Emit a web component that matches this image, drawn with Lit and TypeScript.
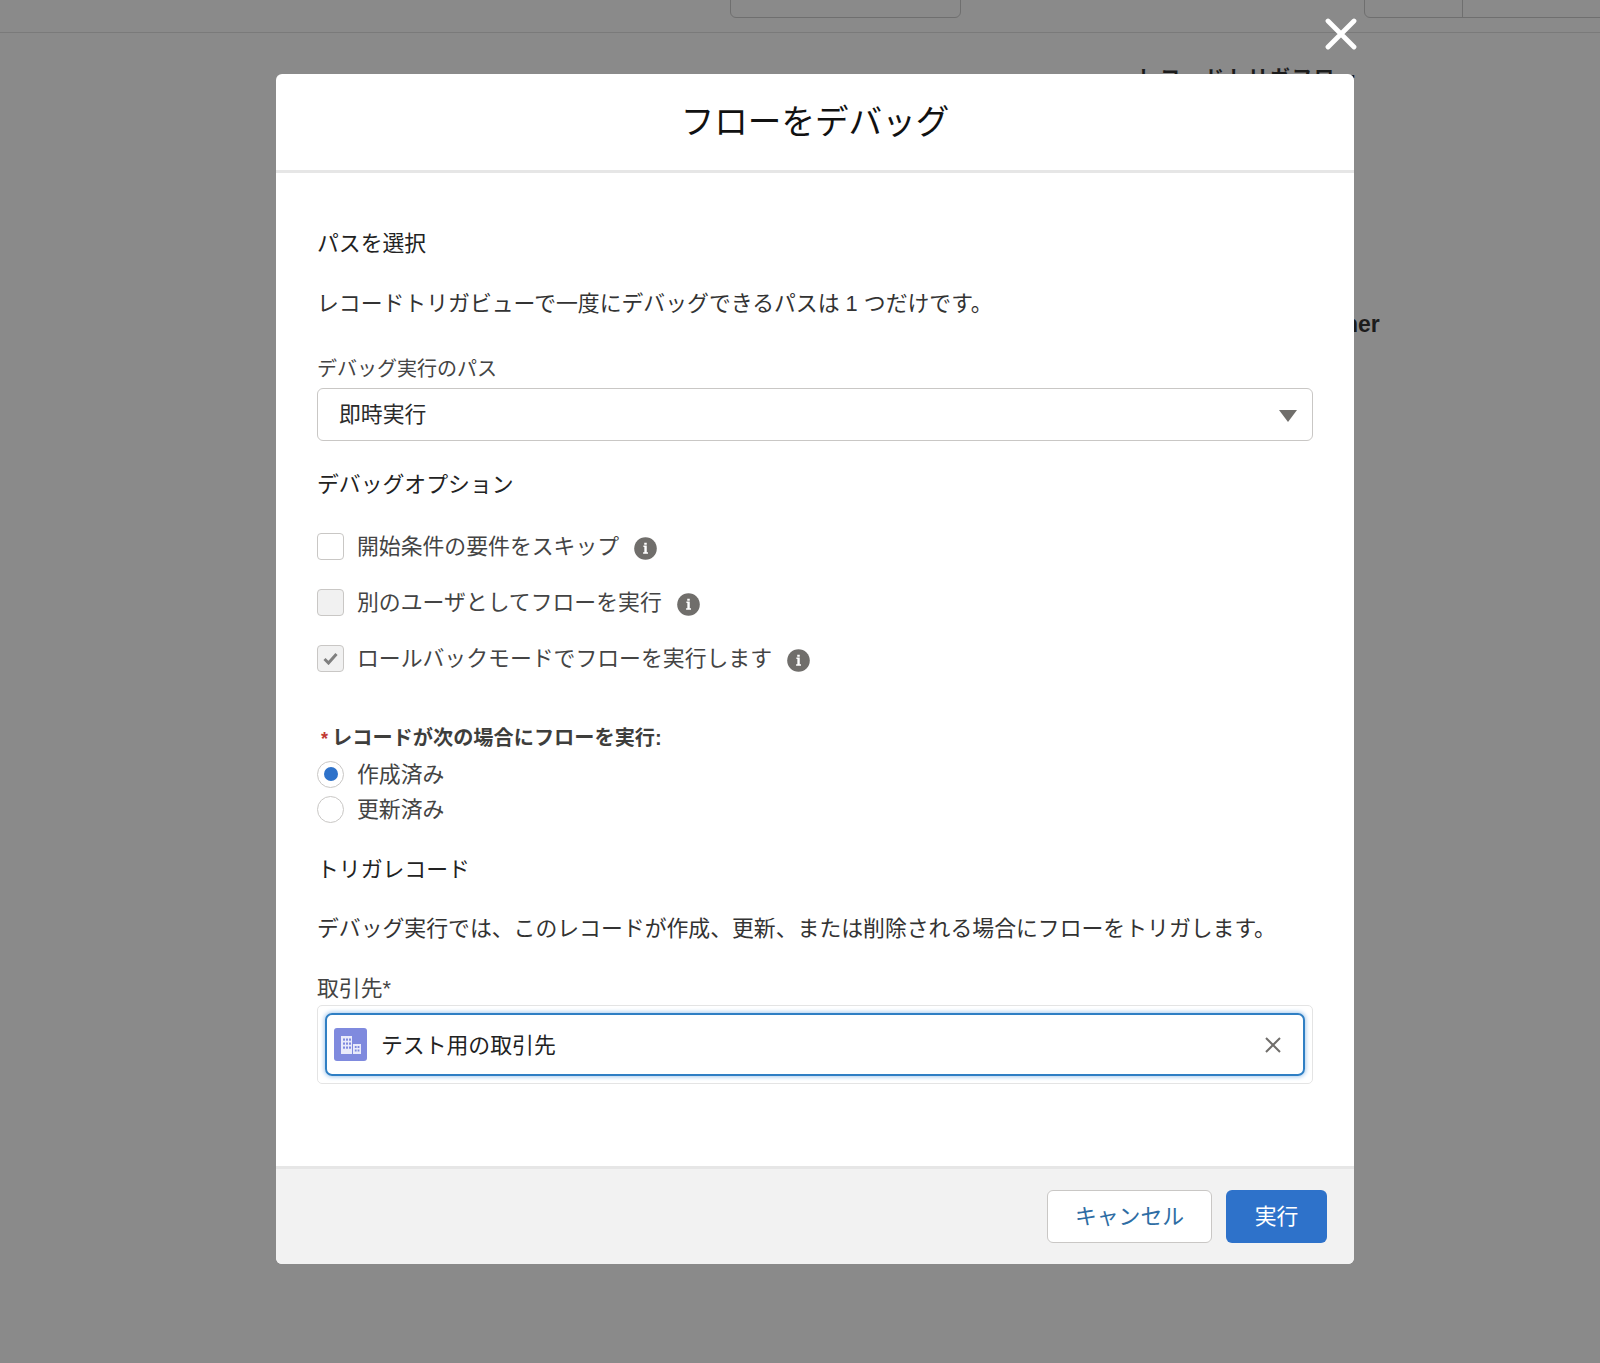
import { LitElement, html, css, svg } from "lit";
import { customElement } from "lit/decorators.js";

const info = svg`<svg class="info" width="23" height="23" viewBox="0 0 22 22"><circle cx="11" cy="11" r="10.8" fill="#706e6b"/><path d="M9 8.2h3.2v6.4h1.2V16H8.7v-1.4h1.2v-5H9z M9.8 5.4h2.4v1.9H9.8z" fill="#fff"/></svg>`;

@customElement("app-root")
export class AppRoot extends LitElement {
  static styles = css`
    :host {
      display: block;
      height: 1363px;
      background: #8a8a8a;
      overflow: hidden;
      position: relative;
      font-family: "Liberation Sans", "Noto Sans CJK JP", sans-serif;
      color: #2b2b2b;
    }
    .topbar {
      height: 32px;
      border-bottom: 1px solid #7a7a7a;
      position: relative;
    }
    .ghost-btn {
      position: absolute;
      top: -18px;
      height: 36px;
      border: 1.5px solid #6f6f6f;
      border-radius: 6px;
      box-sizing: border-box;
    }
    .g1 { left: 730px; width: 231px; }
    .g2 { left: 1364px; width: 300px; }
    .g2::after {
      content: "";
      position: absolute;
      left: 97px;
      top: 0;
      bottom: 0;
      border-left: 1px solid #6f6f6f;
    }
    .behind {
      position: absolute;
      font-weight: 700;
      color: #1c1c1c;
    }
    .b1 { left: 1138px; top: 62px; font-size: 20px; letter-spacing: 2px; }
    .b2 { left: 1344px; top: 311px; font-size: 23px; }
    .close {
      position: absolute;
      left: 1325px;
      top: 18px;
      width: 32px;
      height: 32px;
    }
    .wrap {
      position: absolute;
      left: 276px;
      top: 74px;
      width: 1078px;
      height: 1190px;
      display: flex;
      flex-direction: column;
      background: #fff;
      border-radius: 6px;
      overflow: hidden;
    }
    header {
      flex: none;
      height: 90px;
      padding-bottom: 6px;
      border-bottom: 3px solid #e6e6e6;
      display: flex;
      align-items: center;
      justify-content: center;
      font-size: 33.6px;
      color: #111;
    }
    main {
      flex: 1;
      padding: 0 41px;
      font-size: 21.85px;
    }
    .line { margin: 0; line-height: 30px; }
    .h1 { padding-top: 56px; color: #222; }
    .desc { margin-top: 30px; color: #333; }
    .lbl { margin-top: 35px; font-size: 20px; color: #444; line-height: 30px; }
    .select {
      margin-top: 4px;
      height: 53px;
      box-sizing: border-box;
      border: 1.5px solid #c9c7c5;
      border-radius: 6px;
      display: flex;
      align-items: center;
      justify-content: space-between;
      padding: 0 15px 0 21px;
      color: #2b2b2b;
    }
    .select .v { margin-top: -4px; }
    .tri {
      width: 0;
      height: 0;
      border-left: 9px solid transparent;
      border-right: 9px solid transparent;
      border-top: 12px solid #706e6b;
      margin-top: 3px;
    }
    .h2 { margin-top: 29px; color: #222; }
    .opts { margin-top: 32px; display: flex; flex-direction: column; gap: 28px; }
    .opt { display: flex; align-items: center; height: 28px; color: #444; }
    .opt .t { margin-top: -3px; }
    .box {
      flex: none;
      width: 27px;
      height: 27px;
      box-sizing: border-box;
      border: 1.5px solid #c9c7c5;
      border-radius: 4px;
      background: #fff;
      margin-right: 13px;
      display: flex;
      align-items: center;
      justify-content: center;
    }
    .box.dis { background: #f1f1f1; }
    .info { margin-left: 15px; margin-top: 4px; flex: none; }
    .req {
      margin-top: 51px;
      font-weight: 700;
      font-size: 20.2px;
      color: #3e3e3c;
      line-height: 30px;
      padding-left: 4px;
    }
    .req span { color: #c23934; margin-right: 4px; font-size: 18px; }
    .radios { margin-top: 6px; display: flex; flex-direction: column; gap: 7px; }
    .radio { display: flex; align-items: center; height: 28px; color: #444; }
    .radio .t { margin-top: -3px; }
    .dot {
      flex: none;
      width: 27px;
      height: 27px;
      box-sizing: border-box;
      border: 1.5px solid #c9c7c5;
      border-radius: 50%;
      margin-right: 13px;
      display: flex;
      align-items: center;
      justify-content: center;
    }
    .dot i { width: 14px; height: 14px; border-radius: 50%; background: #2e72ca; }
    .h3 { margin-top: 32px; color: #222; }
    .desc2 { margin-top: 29px; color: #333; }
    .lbl2 { margin-top: 30px; color: #444; }
    .lookup {
      margin-top: 1px;
      height: 79px;
      box-sizing: border-box;
      border: 1px solid #e4e4e4;
      border-radius: 5px;
      padding: 7px;
      display: flex;
    }
    .pill {
      flex: 1;
      border: 2px solid #2f7fc4;
      border-radius: 7px;
      box-shadow: 0 0 4px 1px #a8cbee;
      display: flex;
      align-items: center;
      padding: 0 21px 0 7px;
      color: #222;
    }
    .acct {
      flex: none;
      width: 33px;
      height: 33px;
      border-radius: 3px;
      background: #7f8ade;
      margin-right: 14px;
      display: flex;
      align-items: center;
      justify-content: center;
    }
    .pill .name { flex: 1; margin-top: -2px; }
    footer {
      flex: none;
      height: 98px;
      box-sizing: border-box;
      border-top: 3px solid #e6e6e6;
      background: #f2f2f2;
      display: flex;
      justify-content: flex-end;
      align-items: flex-start;
      gap: 14px;
      padding: 21px 27px 0 0;
    }
    .btn {
      height: 53px;
      box-sizing: border-box;
      border-radius: 6px;
      font-size: 21.85px;
      display: flex;
      align-items: center;
      justify-content: center;
      padding-bottom: 5px;
    }
    .cancel { width: 165px; background: #fff; border: 1.5px solid #c9c7c5; color: #2e6da4; }
    .run { width: 101px; background: #2e72ca; color: #fff; }
  `;

  render() {
    return html`
      <div class="topbar">
        <div class="ghost-btn g1"></div>
        <div class="ghost-btn g2"></div>
      </div>
      <div class="behind b1">レコードトリガフロー</div>
      <div class="behind b2">ner</div>
      <svg class="close" viewBox="0 0 32 32"><path d="M3 3 L29 29 M29 3 L3 29" stroke="#fff" stroke-width="4.8" stroke-linecap="round" fill="none"/></svg>
      <div class="wrap">
        <header>フローをデバッグ</header>
        <main>
          <p class="line h1">パスを選択</p>
          <p class="line desc">レコードトリガビューで一度にデバッグできるパスは 1 つだけです。</p>
          <div class="lbl">デバッグ実行のパス</div>
          <div class="select"><span class="v">即時実行</span><span class="tri"></span></div>
          <p class="line h2">デバッグオプション</p>
          <div class="opts">
            <div class="opt"><span class="box"></span><span class="t">開始条件の要件をスキップ</span>${info}</div>
            <div class="opt"><span class="box dis"></span><span class="t">別のユーザとしてフローを実行</span>${info}</div>
            <div class="opt"><span class="box dis"><svg width="15" height="13" viewBox="0 0 15 13"><path d="M1.5 7 L5.5 11 L13.5 2" stroke="#808080" stroke-width="3" fill="none"/></svg></span><span class="t">ロールバックモードでフローを実行します</span>${info}</div>
          </div>
          <div class="req"><span>*</span>レコードが次の場合にフローを実行:</div>
          <div class="radios">
            <div class="radio"><span class="dot"><i></i></span><span class="t">作成済み</span></div>
            <div class="radio"><span class="dot"></span><span class="t">更新済み</span></div>
          </div>
          <p class="line h3">トリガレコード</p>
          <p class="line desc2">デバッグ実行では、このレコードが作成、更新、または削除される場合にフローをトリガします。</p>
          <p class="line lbl2">取引先*</p>
          <div class="lookup">
            <div class="pill">
              <span class="acct"><svg width="22" height="18" viewBox="0 0 22 18"><path d="M1 0h11v18H1z M13 8h8v10h-8z" fill="#e9ebfa"/><g fill="#7f8ade"><rect x="3" y="2.5" width="2" height="2.2"/><rect x="6" y="2.5" width="2" height="2.2"/><rect x="9" y="2.5" width="2" height="2.2"/><rect x="3" y="6.5" width="2" height="2.2"/><rect x="6" y="6.5" width="2" height="2.2"/><rect x="9" y="6.5" width="2" height="2.2"/><rect x="3" y="10.5" width="2" height="2.2"/><rect x="6" y="10.5" width="2" height="2.2"/><rect x="9" y="10.5" width="2" height="2.2"/><rect x="14.8" y="10" width="1.8" height="2"/><rect x="17.6" y="10" width="1.8" height="2"/><rect x="14.8" y="13.5" width="1.8" height="2"/><rect x="17.6" y="13.5" width="1.8" height="2"/></g></svg></span>
              <span class="name">テスト用の取引先</span>
              <svg width="18" height="18" viewBox="0 0 18 18"><path d="M2 2 L16 16 M16 2 L2 16" stroke="#706e6b" stroke-width="2" fill="none"/></svg>
            </div>
          </div>
        </main>
        <footer>
          <div class="btn cancel">キャンセル</div>
          <div class="btn run">実行</div>
        </footer>
      </div>
    `;
  }
}
